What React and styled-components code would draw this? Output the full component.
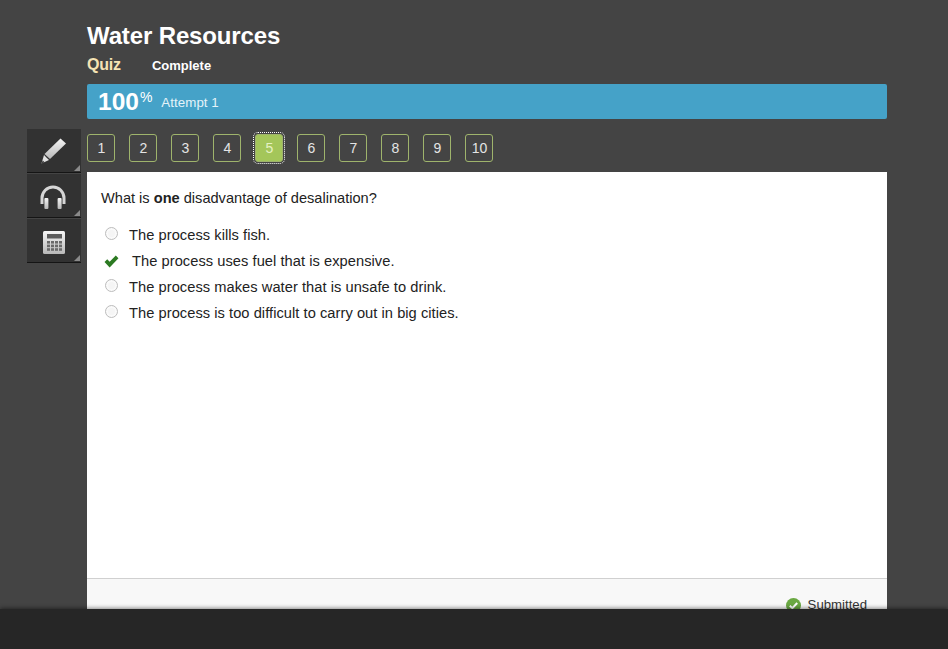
import React from "react";
import styled, { createGlobalStyle } from "styled-components";

const questions = [1, 2, 3, 4, 5, 6, 7, 8, 9, 10];
const answers = [
  { text: "The process kills fish." },
  { text: "The process uses fuel that is expensive.", correct: true },
  { text: "The process makes water that is unsafe to drink." },
  { text: "The process is too difficult to carry out in big cities." },
];

export default function App() {
  return (
    <Page>
      <GlobalStyle />
      <Header>
        <Title>Water Resources</Title>
        <SubRow>
          <Kind>Quiz</Kind>
          <Status>Complete</Status>
        </SubRow>
        <ScoreBar>
          <Score>
            100<sup>%</sup>
          </Score>
          <Attempt>Attempt 1</Attempt>
        </ScoreBar>
      </Header>
      <Main>
        <Tools>
          <Tool>
            <svg width="28" height="28" viewBox="0 0 28 28">
              <defs>
                <linearGradient id="metal" x1="0" y1="0" x2="0" y2="1">
                  <stop offset="0" stopColor="#f6f6f6" />
                  <stop offset="1" stopColor="#b8b8b8" />
                </linearGradient>
              </defs>
              <path d="M20.5 1.5 L26 6.5 L10 22 L4.5 17 Z" fill="url(#metal)" />
              <path d="M4 18 L9 23 L1.5 26.5 Z" fill="#e2e2e2" />
              <path d="M5 19 L8 22 L6.5 20 Z" fill="#555" />
              <path d="M1.5 26.5 L2.8 23.6 L4.6 25.2 Z" fill="#3a3a3a" />
            </svg>
          </Tool>
          <Tool>
            <svg width="28" height="28" viewBox="0 0 28 28">
              <path d="M2 22 V16 a11 11 0 0 1 22 0 V22" fill="none" stroke="#d6d6d6" strokeWidth="3" />
              <rect x="4.4" y="16" width="4" height="11" rx="1" fill="url(#metal)" />
              <rect x="17.6" y="16" width="4" height="11" rx="1" fill="url(#metal)" />
            </svg>
          </Tool>
          <Tool>
            <svg width="28" height="28" viewBox="0 0 28 28">
              <rect x="3" y="4" width="22" height="23" rx="1.5" fill="url(#metal)" />
              <rect x="7" y="7" width="15" height="4.5" fill="#5c5c5c" />
              {[14, 17.6, 21.2].map((y) =>
                [7, 11, 15, 19].map((x) => (
                  <rect key={`${x}-${y}`} x={x} y={y} width="3" height="2.6" fill="#6a6a6a" />
                ))
              )}
            </svg>
          </Tool>
        </Tools>
        <Column>
          <QuestionNav>
            {questions.map((n) => (
              <NavButton key={n} $active={n === 5}>
                {n}
              </NavButton>
            ))}
          </QuestionNav>
          <Card>
            <CardBody>
              <Prompt>
                What is <b>one</b> disadvantage of desalination?
              </Prompt>
              <AnswerList>
                {answers.map((a) => (
                  <Answer key={a.text}>
                    {a.correct ? (
                      <Check viewBox="0 0 16 14">
                        <path d="M0.5 7.5 L3.4 4.6 L6 7.2 L12.6 0.5 L15.5 3.4 L6 13.5 Z" fill="#2c7a22" />
                      </Check>
                    ) : (
                      <Radio />
                    )}
                    <AnswerText $correct={a.correct}>{a.text}</AnswerText>
                  </Answer>
                ))}
              </AnswerList>
            </CardBody>
            <CardFooter>
              <svg width="15" height="15" viewBox="0 0 15 15">
                <circle cx="7.5" cy="7.5" r="7.5" fill="#6aa842" />
                <path d="M3.8 7.8 L6.4 10.2 L11.2 5" fill="none" stroke="#fff" strokeWidth="2" />
              </svg>
              <span>Submitted</span>
            </CardFooter>
          </Card>
        </Column>
      </Main>
      <BottomBar />
    </Page>
  );
}

const GlobalStyle = createGlobalStyle`
  html, body {
    margin: 0;
    height: 100%;
    overflow: hidden;
    background: #444444;
  }
  body {
    font-family: "Liberation Sans", Arial, sans-serif;
  }
`;
const Page = styled.div`
  position: relative;
  height: 649px;
  overflow: hidden;
  background: #444444;
`;
const Header = styled.header`
  width: 800px;
  margin-left: 87px;
  padding-top: 22px;
`;
const Title = styled.h1`
  margin: 0;
  font-size: 24px;
  line-height: 28px;
  font-weight: 700;
  letter-spacing: -0.13px;
  color: #fff;
`;
const SubRow = styled.div`
  display: flex;
  align-items: baseline;
  gap: 31px;
  height: 34px;
  padding-top: 5px;
  box-sizing: border-box;
`;
const Kind = styled.span`
  font-size: 16px;
  line-height: 20px;
  font-weight: 700;
  letter-spacing: -0.2px;
  color: #f6e3b4;
`;
const Status = styled.span`
  font-size: 13px;
  font-weight: 700;
  color: #fff;
`;
const ScoreBar = styled.div`
  display: flex;
  align-items: center;
  gap: 9px;
  height: 35px;
  padding-left: 11px;
  box-sizing: border-box;
  border-radius: 2px;
  background: #45a2c8;
`;
const Score = styled.div`
  font-size: 24.5px;
  font-weight: 700;
  color: #fff;
  sup {
    font-size: 14px;
    font-weight: 400;
    line-height: 0;
    vertical-align: 8px;
    margin-left: 1px;
  }
`;
const Attempt = styled.div`
  margin-top: 2px;
  font-size: 13.33px;
  letter-spacing: 0.05px;
  color: #e4f3f9;
`;
const Main = styled.div`
  display: flex;
  margin-top: 10px;
  padding-left: 27px;
`;
const Tools = styled.div`
  width: 54px;
  margin-right: 6px;
  align-self: flex-start;
`;
const Tool = styled.div`
  position: relative;
  display: flex;
  align-items: center;
  justify-content: center;
  height: 44px;
  margin-bottom: 1px;
  background: #323232;
  border-bottom: 1px solid #151515;
  box-sizing: border-box;
  &::after {
    content: "";
    position: absolute;
    right: 1px;
    bottom: 1px;
    border-style: solid;
    border-width: 0 0 6px 6px;
    border-color: transparent transparent #8a8a8a transparent;
  }
`;
const Column = styled.div`
  width: 800px;
`;
const QuestionNav = styled.nav`
  display: flex;
  gap: 14px;
  height: 43px;
  padding-top: 5px;
  box-sizing: border-box;
`;
const NavButton = styled.div`
  position: relative;
  display: flex;
  align-items: center;
  justify-content: center;
  width: 28px;
  height: 28px;
  padding-left: 1px;
  box-sizing: border-box;
  border: 1px solid #9fb46c;
  border-radius: 3px;
  font-size: 14px;
  color: ${(p) => (p.$active ? "#e6f2c4" : "#e4e4e4")};
  background: ${(p) => (p.$active ? "#a4c65a" : "transparent")};
  outline: ${(p) => (p.$active ? "1px dotted #fff" : "none")};
  outline-offset: 1px;
`;
const Card = styled.div`
  display: flex;
  flex-direction: column;
  height: 460px;
  background: #fff;
`;
const CardBody = styled.div`
  flex: 1;
  padding: 17px 14px 0;
`;
const Prompt = styled.p`
  margin: 0 0 14px;
  font-size: 14.6px;
  line-height: 18px;
  color: #222;
`;
const AnswerList = styled.div`
  display: flex;
  flex-direction: column;
`;
const Answer = styled.div`
  display: flex;
  align-items: center;
  height: 26px;
`;
const Radio = styled.span`
  width: 13px;
  height: 13px;
  margin: 0 0 2px 4px;
  box-sizing: border-box;
  border: 1px solid #bdbdbd;
  border-radius: 50%;
  background: #f5f5f5;
  box-shadow: inset 0 0 0 2px #fafafa;
`;
const Check = styled.svg`
  width: 15px;
  height: 13px;
  margin: 2px 0 0 3px;
`;
const AnswerText = styled.span`
  margin-left: ${(p) => (p.$correct ? "13px" : "11px")};
  padding-top: 2px;
  font-size: 14.667px;
  letter-spacing: 0.045px;
  color: #222;
`;
const CardFooter = styled.div`
  display: flex;
  justify-content: flex-end;
  align-items: center;
  gap: 7px;
  height: 54px;
  padding-right: 20px;
  box-sizing: border-box;
  border-top: 1px solid #d0d0d0;
  background: #f8f8f8;
  font-size: 13.2px;
  color: #333;
  span {
    margin-bottom: 2px;
  }
`;
const BottomBar = styled.div`
  position: absolute;
  left: 0;
  right: 0;
  bottom: 0;
  height: 40px;
  background: #262626;
  box-shadow: 0 -1px 4px rgba(0, 0, 0, 0.45);
`;
